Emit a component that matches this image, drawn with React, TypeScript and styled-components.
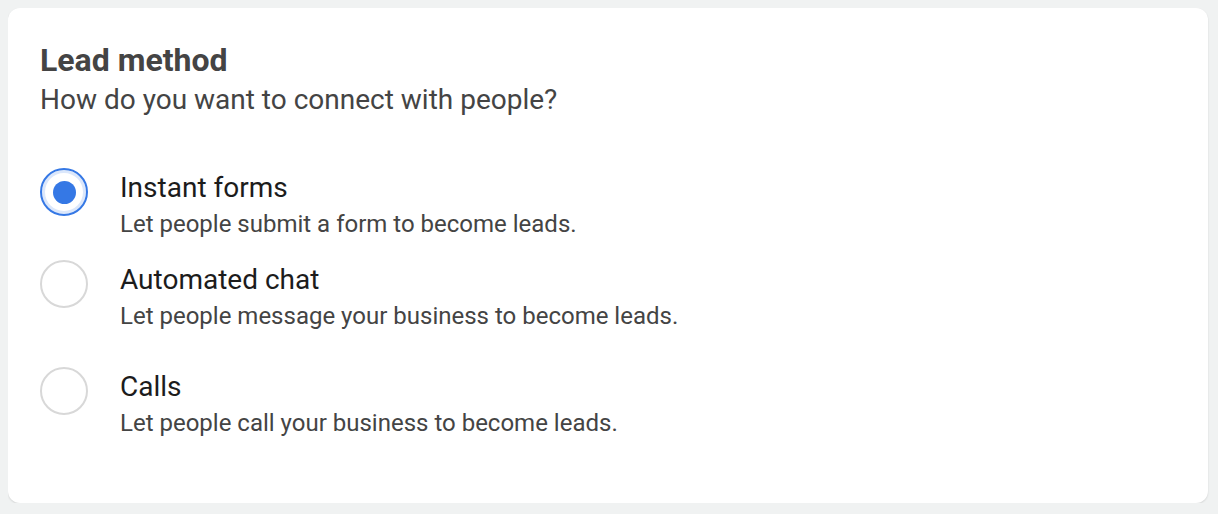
import { useState } from "react";
import styled, { createGlobalStyle } from "styled-components";

const GlobalStyle = createGlobalStyle`
  body {
    margin: 8px;
    background-color: #f0f2f2;
    font-family: Roboto, "Liberation Sans", Arial, sans-serif;
  }
`;

const Card = styled.div`
  display: flex;
  flex-direction: column;
  width: 1200px;
  height: 495px;
  box-sizing: border-box;
  padding: 32px 32px;
  background-color: #ffffff;
  border-radius: 12px;
  box-shadow: 0 1px 2px rgba(0, 0, 0, 0.12);
`;

const Title = styled.h2`
  margin: 0;
  font-size: 32px;
  line-height: 40px;
  font-weight: 700;
  color: #444444;
`;

const Subtitle = styled.p`
  margin: 0;
  font-size: 28px;
  line-height: 40px;
  color: #444444;
`;

const OptionList = styled.div`
  display: flex;
  flex-direction: column;
  margin-top: 50px;
`;

const Option = styled.label<{ $gap: number }>`
  display: flex;
  align-items: flex-start;
  gap: 32px;
  margin-bottom: ${(p) => p.$gap}px;
  cursor: pointer;
`;

const Radio = styled.span<{ $checked: boolean }>`
  display: flex;
  align-items: center;
  justify-content: center;
  flex-shrink: 0;
  width: 48px;
  height: 48px;
  box-sizing: border-box;
  margin-top: -2px;
  border-radius: 50%;
  border: 2px solid ${(p) => (p.$checked ? "#3578e5" : "#d8d8d8")};
  box-shadow: ${(p) => (p.$checked ? "inset 0 0 0 3px #dbe7fb" : "none")};
  background: #ffffff;
`;

const Dot = styled.span`
  width: 23px;
  height: 23px;
  border-radius: 50%;
  background-color: #3578e5;
`;

const Texts = styled.div`
  display: flex;
  flex-direction: column;
`;

const Label = styled.span`
  font-size: 28px;
  line-height: 36px;
  color: #1c1c1c;
`;

const Description = styled.span`
  font-size: 24px;
  line-height: 36px;
  color: #444444;
`;

const options = [
  {
    label: "Instant forms",
    description: "Let people submit a form to become leads.",
    gap: 20,
  },
  {
    label: "Automated chat",
    description: "Let people message your business to become leads.",
    gap: 35,
  },
  {
    label: "Calls",
    description: "Let people call your business to become leads.",
    gap: 0,
  },
];

function App() {
  const [selected, setSelected] = useState(0);

  return (
    <>
      <GlobalStyle />
      <Card>
        <Title>Lead method</Title>
        <Subtitle>How do you want to connect with people?</Subtitle>
        <OptionList>
          {options.map((option, i) => (
            <Option key={option.label} $gap={option.gap} onClick={() => setSelected(i)}>
              <Radio $checked={selected === i}>{selected === i && <Dot />}</Radio>
              <Texts>
                <Label>{option.label}</Label>
                <Description>{option.description}</Description>
              </Texts>
            </Option>
          ))}
        </OptionList>
      </Card>
    </>
  );
}

export default App;
